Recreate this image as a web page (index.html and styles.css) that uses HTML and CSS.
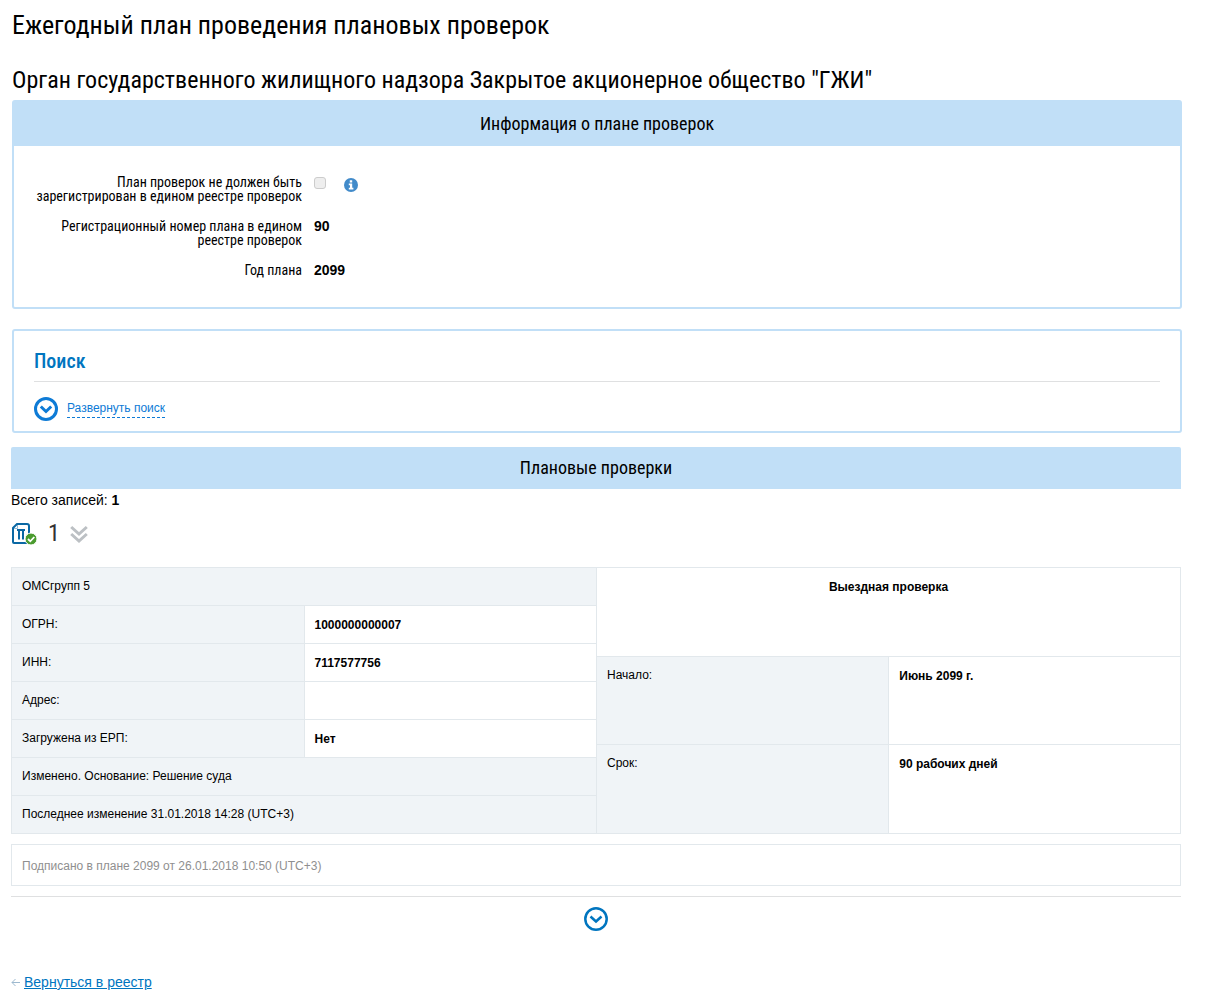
FILE: index.html
```html
<!DOCTYPE html>
<html lang="ru">
<head>
  <meta charset="UTF-8">
  <meta name="viewport" content="width=device-width, initial-scale=1.0">
  <title>Ежегодный план проведения плановых проверок</title>
  <link rel="stylesheet" href="styles.css">
</head>
<body>
  <main class="page">
    <div class="top">
      <h1>Ежегодный план проведения плановых проверок</h1>
      <h2>Орган государственного жилищного надзора Закрытое акционерное общество "ГЖИ"</h2>

      <!-- Plan info -->
      <section class="panel">
        <h3 class="panel-heading">Информация о плане проверок</h3>
        <div class="panel-body">
          <div class="form-row">
            <label for="notRegistered">План проверок не должен быть зарегистрирован в едином реестре проверок</label>
            <div class="form-value">
              <input type="checkbox" id="notRegistered" class="checkbox">
              <svg class="icon-info" width="14" height="14" viewBox="0 0 14 14">
                <circle cx="7" cy="7" r="7" fill="#428bca"/>
                <path d="M5.800 2.200h2.400v2.200H5.800zM4.800 5.400h3.400v4.300h1.200v1.800H4.800V9.700H6V7.200H4.800z" fill="#fff"/>
              </svg>
            </div>
          </div>
          <div class="form-row">
            <span class="form-label">Регистрационный номер плана в едином реестре проверок</span>
            <b class="form-value">90</b>
          </div>
          <div class="form-row">
            <span class="form-label">Год плана</span>
            <b class="form-value">2099</b>
          </div>
        </div>
      </section>

      <!-- Search -->
      <section class="panel search">
        <h3 class="search-title">Поиск</h3>
        <button type="button" class="search-toggle">
          <svg width="24" height="24" viewBox="0 0 24 24" fill="none" stroke="#0e7bd6" stroke-width="3">
            <circle cx="12" cy="12" r="10.500"/>
            <path d="M6.800 9.500L12 14.500l5.200-5"/>
          </svg>
          <span>Развернуть поиск</span>
        </button>
      </section>
    </div>

    <!-- Inspections -->
    <h3 class="list-heading">Плановые проверки</h3>
    <p class="total">Всего записей: <b>1</b></p>

    <div class="record-head">
      <svg width="26" height="22" viewBox="0 0 26 22">
        <path d="M5 1H15a2 2 0 0 1 2 2v16a1 1 0 0 1-1 1H2a1 1 0 0 1-1-1V5z" fill="#fff" stroke="#0b68a4" stroke-width="2"/>
        <path d="M2 5.500h3.500V2" fill="none" stroke="#8fb8d4" stroke-width="1"/>
        <path d="M5 7h8M7 7v9.500M11 7v9.500" fill="none" stroke="#0b68a4" stroke-width="2"/>
        <circle cx="19" cy="16" r="6" fill="#4b9b2f" stroke="#fff" stroke-width="1"/>
        <path d="M16 16l2.300 2.300 4-4.300" fill="none" stroke="#fff" stroke-width="1.800"/>
      </svg>
      <span class="record-number">1</span>
      <svg width="18" height="18" viewBox="0 0 18 18" fill="none" stroke="#bcc0c4" stroke-width="3">
        <path d="M1.200 2L9 9l7.800-7M1.200 9L9 16l7.800-7"/>
      </svg>
    </div>

    <div class="record">
      <table class="record-table record-info">
        <tr><th colspan="2">ОМСгрупп 5</th></tr>
        <tr><th>ОГРН:</th><td>1000000000007</td></tr>
        <tr><th>ИНН:</th><td>7117577756</td></tr>
        <tr><th>Адрес:</th><td></td></tr>
        <tr><th>Загружена из ЕРП:</th><td>Нет</td></tr>
        <tr><th colspan="2">Изменено. Основание: Решение суда</th></tr>
        <tr><th colspan="2">Последнее изменение 31.01.2018 14:28 (UTC+3)</th></tr>
      </table>
      <table class="record-table record-dates">
        <tr><td colspan="2" class="kind">Выездная проверка</td></tr>
        <tr><th>Начало:</th><td>Июнь 2099 г.</td></tr>
        <tr><th>Срок:</th><td>90 рабочих дней</td></tr>
      </table>
    </div>

    <p class="signed">Подписано в плане 2099 от 26.01.2018 10:50 (UTC+3)</p>

    <div class="more">
      <button type="button" class="more-btn" aria-label="Развернуть">
        <svg width="24" height="24" viewBox="0 0 24 24" fill="none" stroke="#0075bf" stroke-width="2.500">
          <circle cx="12" cy="12" r="10.700"/>
          <path d="M6.500 9.500L12 14.500l5.500-5"/>
        </svg>
      </button>
    </div>

    <div class="back">
      <svg width="9" height="9" viewBox="0 0 9 9" fill="none" stroke="#9db9cf" stroke-width="1">
        <path d="M9 4.500H1M4.500 1L1 4.500 4.500 8"/>
      </svg>
      <a href="#">Вернуться в реестр</a>
    </div>
  </main>
</body>
</html>
```

FILE: styles.css
```css
* {
    box-sizing: border-box;
}

body {
    margin: 0;
    background-color: #fff;
    color: #000;
    font-family: "Liberation Sans", Arial, sans-serif;
    font-size: 14px;
    line-height: 20px;
}

h1, h2, h3, p {
    margin: 0;
    font-weight: normal;
}

h1, h2, h3, label, .form-label, .record-number {
    font-family: "Roboto Condensed", "Roboto", sans-serif;
}

.page {
    padding: 8px 31px 8px 11px;
}

/* the framed panels stand 1px to the right of the list */
.top {
    margin: 0 -1px 0 1px;
}

h1 {
    font-size: 26px;
    line-height: 34px;
}

h2 {
    margin-top: 22px;
    font-size: 24px;
    line-height: 32px;
}

.panel {
    margin-top: 4px;
    border: 2px solid #c1dff7;
    border-radius: 3px;
}

.panel-heading {
    background-color: #c1dff7;
    font-size: 18px;
    line-height: 44px;
    text-align: center;
}

.panel-body {
    display: flex;
    flex-direction: column;
    gap: 16px;
    padding: 29px 20px 30px;
}

.form-row {
    display: flex;
    gap: 12px;
    line-height: 14px;
}

.form-row label,
.form-label {
    width: 268px;
    text-align: right;
}

.form-value {
    display: flex;
    gap: 18px;
}

.checkbox {
    appearance: none;
    width: 12px;
    height: 12px;
    margin: 2px 0 0;
    border: 1px solid #ccc;
    border-radius: 3px;
    background-color: #eee;
}

.icon-info {
    margin-top: 3px;
}

.search {
    margin-top: 20px;
    padding: 17px 20px 10px;
}

.search-title {
    padding-bottom: 7px;
    border-bottom: 1px solid #dfe0e1;
    color: #0075bf;
    font-size: 20px;
    font-weight: 500;
    line-height: 26px;
}

button {
    padding: 0;
    border: none;
    background: none;
    font-family: inherit;
    cursor: pointer;
}

button svg {
    display: block;
}

.search-toggle {
    display: flex;
    gap: 9px;
    margin-top: 15px;
    color: #0e7bd6;
    font-size: 12px;
}

.search-toggle span {
    height: 21px;
    border-bottom: 1px dashed #0e7bd6;
    line-height: 22px;
}

.list-heading {
    margin-top: 14px;
    border-radius: 2px 2px 0 0;
    background-color: #c1dff7;
    font-size: 18px;
    line-height: 42px;
    text-align: center;
}

.total {
    line-height: 22px;
}

.record-head {
    display: flex;
    align-items: center;
    gap: 10px;
    margin: 7px 0 18px 1px;
}

.record-number {
    color: #333;
    font-size: 24px;
    line-height: 31px;
}

.record {
    display: flex;
}

.record-table {
    border-collapse: collapse;
    table-layout: fixed;
    font-size: 12px;
    line-height: 17px;
}

/* 1px more for the border shared with the dates table */
.record-info {
    width: calc(50% + 1px);
}

.record-dates {
    width: calc(50% - 1px);
}

.record-table th,
.record-table td {
    height: 38px;
    padding: 10px;
    border: 1px solid #e2e8ec;
    text-align: left;
    vertical-align: top;
}

.record-table th {
    background-color: #f0f4f7;
    font-weight: normal;
}

.record-table td {
    padding-top: 11px;
    padding-bottom: 9px;
    font-weight: bold;
}

.record-dates th,
.record-dates td {
    height: 88px;
}

.record-dates th,
.record-dates td.kind {
    border-left: none;
}

.record-dates td.kind {
    text-align: center;
}

.signed {
    margin-top: 10px;
    padding: 11px 10px 9px;
    border: 1px solid #e2e8ec;
    color: #8f8f8f;
    font-size: 12px;
}

.more {
    display: flex;
    justify-content: center;
    margin-top: 10px;
    padding-top: 10px;
    border-top: 1px solid #dfe0e1;
}

.back {
    display: flex;
    align-items: center;
    gap: 4px;
    margin-top: 41px;
}

.back a {
    color: #0075bf;
}
```
